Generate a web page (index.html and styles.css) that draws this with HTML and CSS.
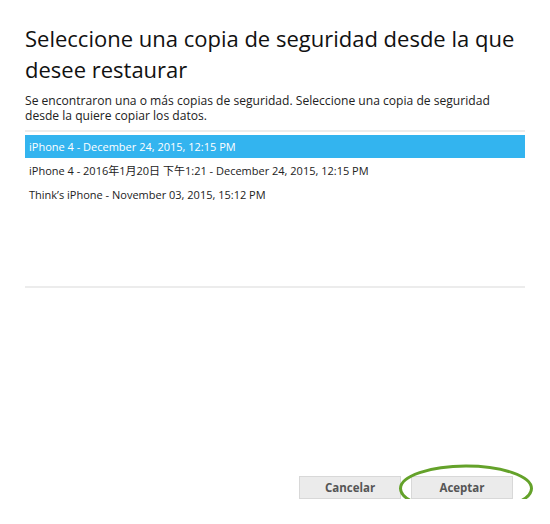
FILE: index.html
```html
<!DOCTYPE html>
<html lang="es">
<head>
  <meta charset="UTF-8">
  <title>Restaurar copia de seguridad</title>
  <link rel="stylesheet" href="styles.css">
</head>
<body>
<div class="dialog">
  <h1 class="title">Seleccione una copia de seguridad desde la que desee restaurar</h1>
  <p class="subtitle">Se encontraron una o más copias de seguridad. Seleccione una copia de seguridad desde la quiere copiar los datos.</p>

  <ul class="backup-list">
    <li class="backup-item selected">iPhone 4 - December 24, 2015, 12:15 PM</li>
    <li class="backup-item">iPhone 4 - 2016年1月20日 下午1:21 - December 24, 2015, 12:15 PM</li>
    <li class="backup-item">Think’s iPhone - November 03, 2015, 15:12 PM</li>
  </ul>

  <div class="actions">
    <button class="btn">Cancelar</button>
    <button class="btn btn-ok">Aceptar
      <svg class="highlight" width="136" height="49" viewBox="0 0 136 49">
        <ellipse cx="68" cy="24.5" rx="65.5" ry="22.5" fill="none" stroke="#64a22a" stroke-width="3"/>
      </svg>
    </button>
  </div>
</div>
</body>
</html>
```

FILE: styles.css
```css
body {
  margin: 0;
  background-color: #fff;
  font-family: 'Open Sans', 'Noto Sans CJK SC', sans-serif;
  color: #111;
}
.dialog {
  padding: 23px 25px 0 25px;
}
.title {
  margin: 0;
  font-size: 22px;
  font-weight: normal;
  line-height: 31px;
  color: #111;
}
.subtitle {
  margin: 8px 0 0 0;
  font-size: 12.1px;
  line-height: 15px;
  color: #222;
}
.backup-list {
  list-style: none;
  margin: 7px 0 0 0;
  padding: 3px 0 0 0;
  height: 151px;
  border-top: 2px solid #ececec;
  border-bottom: 2px solid #ececec;
}
.backup-item {
  height: 23px;
  line-height: 23px;
  margin-bottom: 1px;
  padding-left: 4px;
  font-size: 11px;
  color: #222;
}
.backup-item.selected {
  background-color: #33b4ef;
  color: #fff;
}
.actions {
  display: flex;
  justify-content: flex-end;
  gap: 10px;
  margin-top: 188px;
  padding-right: 12px;
}
.btn {
  position: relative;
  width: 102px;
  height: 23px;
  background-color: #ebebeb;
  border: 1px solid #d8d8d8;
  font-family: 'Open Sans', sans-serif;
  font-size: 11.5px;
  font-weight: bold;
  color: #555;
}
.highlight {
  position: absolute;
  left: -14px;
  top: -13px;
}
```
